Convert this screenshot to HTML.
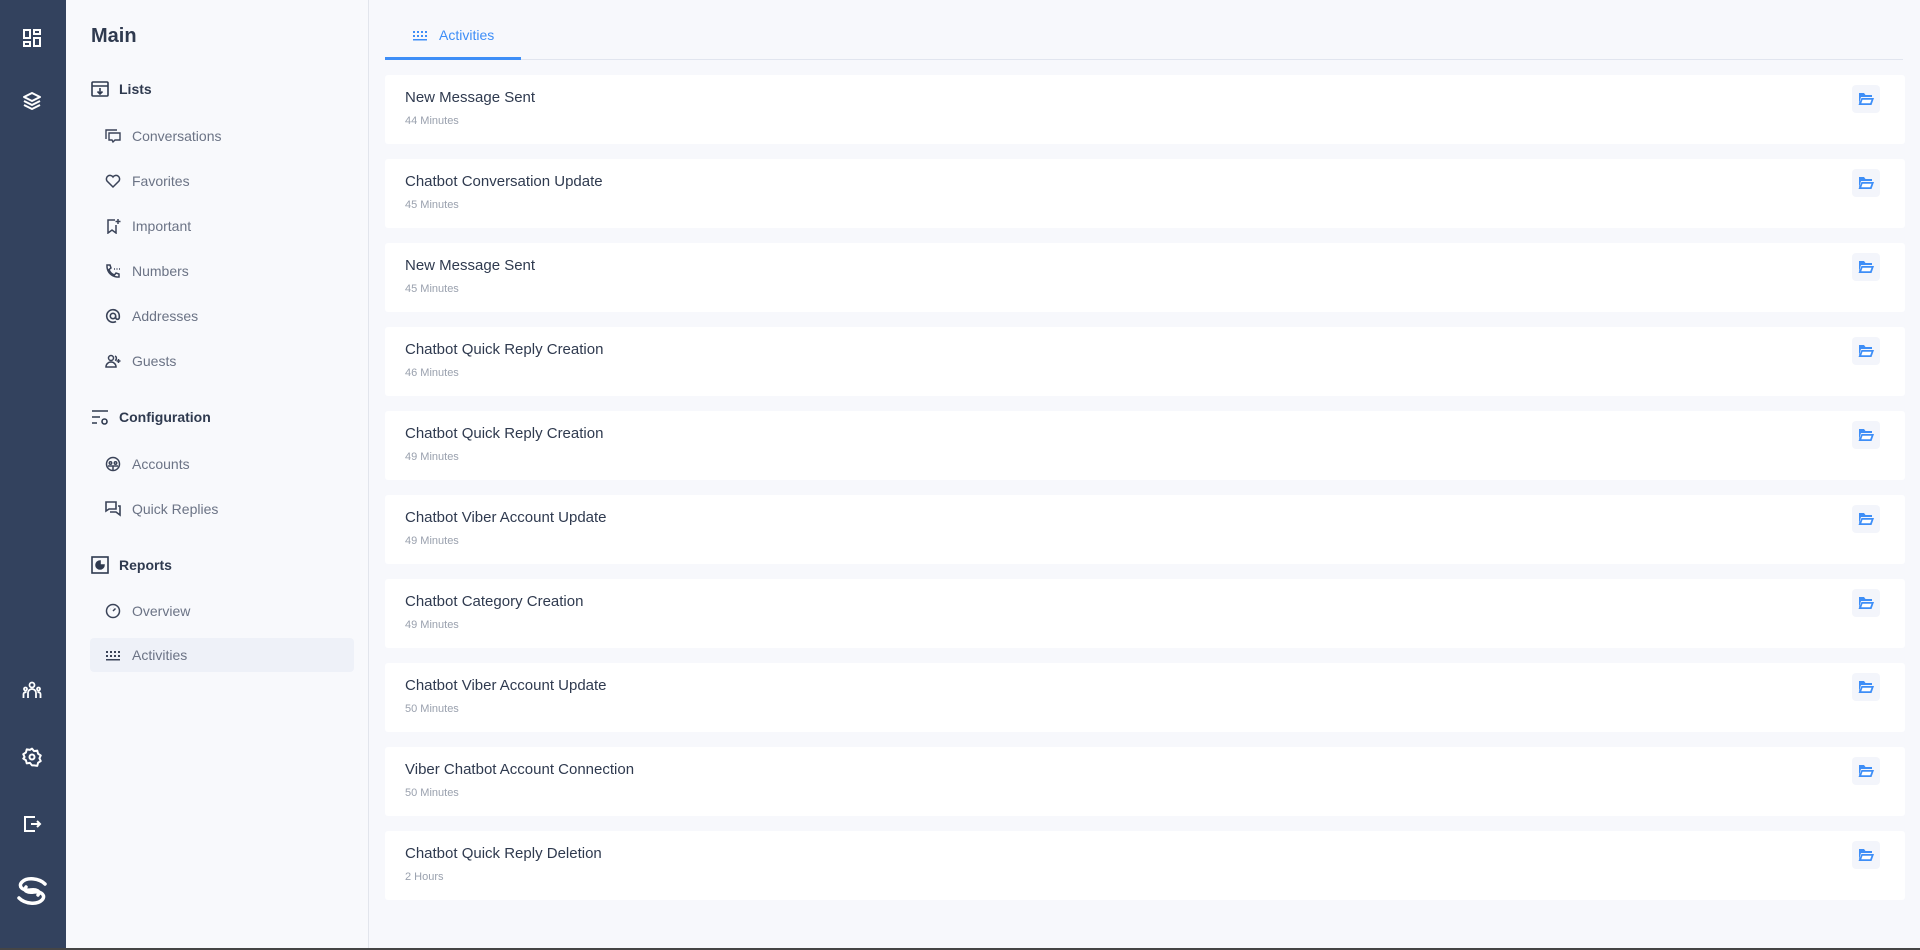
<!DOCTYPE html>
<html><head><meta charset="utf-8"><style>
*{margin:0;padding:0;box-sizing:border-box}
body{width:1920px;height:950px;overflow:hidden;background:#f7f8fc;font-family:"Liberation Sans",sans-serif;position:relative}
.rail{position:absolute;left:0;top:0;width:66px;height:948px;background:#33425e}
.rail svg{position:absolute;left:22px}
.side{position:absolute;left:66px;top:0;width:303px;height:948px;background:#f8f9fc;border-right:1px solid #e2e5ec}
.side .h1{position:absolute;left:25px;top:25px;font-size:20px;font-weight:bold;color:#2f3a4f}
.sec{position:absolute;left:25px;font-size:14px;font-weight:bold;color:#2f3a4f;display:flex;align-items:center}
.sec svg{margin-right:10px}
.it{position:absolute;left:24px;width:264px;height:34px;font-size:14px;color:#6b7385;display:flex;align-items:center;padding-left:15px;border-radius:4px}
.it svg{margin-right:11px}
.it.act{background:#eef1f8}
.main{position:absolute;left:370px;top:0;right:0;height:948px}
.tabs{position:absolute;left:15px;right:17px;top:0;height:60px;border-bottom:1px solid #e1e5ef}
.tab{position:absolute;left:0;top:0;width:136px;height:60px;border-bottom:3px solid #3e8ef7;color:#3e8ef7;font-size:14px;display:flex;align-items:flex-start;padding-left:27px;padding-top:27px}
.tab svg{margin-right:11px}
.card{position:absolute;left:15px;width:1520px;height:69px;background:#fff;border-radius:3px}
.card .t{position:absolute;left:20px;top:14px;font-size:15px;color:#2f3a4f}
.card .s{position:absolute;left:20px;top:40px;font-size:11px;color:#9aa1ae}
.card .b{position:absolute;right:25px;top:10px;width:28px;height:28px;background:#f3f5fb;border-radius:4px;display:flex;align-items:center;justify-content:center}
.bot{position:absolute;left:0;top:948px;width:1920px;height:2px;background:#454545}
</style></head><body>
<div class="rail">
<svg style="top:28px" width="20" height="20" viewBox="0 0 20 20" fill="none" stroke="#fff" stroke-width="2"><rect x="2" y="2" width="6" height="8"/><rect x="12" y="2" width="6" height="4"/><rect x="2" y="14" width="6" height="4"/><rect x="12" y="10" width="6" height="8"/></svg>
<svg style="top:91px" width="20" height="20" viewBox="0 0 20 20" fill="none" stroke="#fff" stroke-width="2" stroke-linejoin="round"><path d="M10 2L18 6L10 10L2 6Z"/><path d="M2 10L10 14L18 10"/><path d="M2 14L10 18L18 14"/></svg>
<svg style="top:680px" width="20" height="20" viewBox="0 0 20 20" fill="none" stroke="#fff" stroke-width="1.8"><circle cx="10" cy="5" r="2.5"/><path d="M6 18v-5a4 4 0 0 1 8 0v5"/><circle cx="3.5" cy="9" r="1.5"/><path d="M1.5 18v-4a2 2 0 0 1 3-1.5"/><circle cx="16.5" cy="9" r="1.5"/><path d="M18.5 18v-4a2 2 0 0 0-3-1.5"/></svg>
<svg style="top:747px" width="20" height="20" viewBox="0 0 24 24" fill="none" stroke="#fff" stroke-width="2.4"><circle cx="12" cy="12" r="3"/><path d="M12 2l2.5 3 3.8-.6 1 3.7 3.2 2-1.6 3.4 1.6 3.4-3.2 2-1 3.7-3.8-.6L12 22l-2.5-3-3.8.6-1-3.7-3.2-2L3.1 12 1.5 8.6l3.2-2 1-3.7 3.8.6z" stroke-linejoin="round"/></svg>
<svg style="top:814px" width="20" height="20" viewBox="0 0 20 20" fill="none" stroke="#fff" stroke-width="2"><path d="M13 3H3v14h10"/><path d="M9 10h9M15 7l3 3-3 3"/></svg>
<svg style="left:15px;top:876px" width="34" height="30" viewBox="0 0 34 30" fill="none" stroke="#fff" stroke-width="3.5" stroke-linecap="round"><path d="M30 8C24 2 12 1 7 6c-4 4 0 9 8 8 6-1 11 1 8 5"/><path d="M4 22c6 6 18 7 23 2 4-4 0-9-8-8-6 1-11-1-8-5"/></svg>
</div>
<div class="side">
<div class="h1">Main</div>
<div class="sec" style="top:80px"><svg width="18" height="18" viewBox="0 0 18 18" fill="none" stroke="#2f3a4f" stroke-width="1.6"><rect x="1" y="2" width="16" height="14" rx="1"/><path d="M1 6h16M9 8v6M6.5 11.5L9 14l2.5-2.5"/></svg>Lists</div>
<div class="it" style="top:119px"><svg width="16" height="16" viewBox="0 0 16 16" fill="none" stroke="#3a4358" stroke-width="1.4"><path d="M1 11V2h11"/><path d="M4 5h11v7H10l-2 2-1-2H4z"/></svg>Conversations</div>
<div class="it" style="top:164px"><svg width="16" height="16" viewBox="0 0 16 16" fill="none" stroke="#3a4358" stroke-width="1.5"><path d="M8 14L2 8a3.3 3.3 0 0 1 6-4 3.3 3.3 0 0 1 6 4z"/></svg>Favorites</div>
<div class="it" style="top:209px"><svg width="16" height="16" viewBox="0 0 16 16" fill="none" stroke="#3a4358" stroke-width="1.5"><path d="M10 2H3v13l4-3 4 3V7M13 1v5M10.5 3.5h5"/></svg>Important</div>
<div class="it" style="top:254px"><svg width="16" height="16" viewBox="0 0 16 16" fill="none" stroke="#3a4358" stroke-width="1.5"><path d="M2 2h3l1 3-2 1.5A9 9 0 0 0 9.5 12L11 10l3 1v3h-2A11 11 0 0 1 2 4z"/><path d="M9 6h1M11.5 6h1M14 6h1" /></svg>Numbers</div>
<div class="it" style="top:299px"><svg width="16" height="16" viewBox="0 0 16 16" fill="none" stroke="#3a4358" stroke-width="1.6"><circle cx="8" cy="8" r="2.7"/><path d="M10.7 8v1.5a1.8 1.8 0 0 0 3.6 0V8A6.3 6.3 0 1 0 11 13.5"/></svg>Addresses</div>
<div class="it" style="top:344px"><svg width="16" height="16" viewBox="0 0 16 16" fill="none" stroke="#3a4358" stroke-width="1.5"><circle cx="6" cy="5" r="2.5"/><path d="M1 14a5 5 0 0 1 10 0zM10 3a2.5 2.5 0 0 1 0 4.5M13.5 6v4M11.5 8h4"/></svg>Guests</div>
<div class="sec" style="top:408px"><svg width="18" height="18" viewBox="0 0 18 18" fill="none" stroke="#2f3a4f" stroke-width="1.6"><path d="M1 3h16M1 9h8M1 15h5"/><circle cx="13.5" cy="13.5" r="2.5"/></svg>Configuration</div>
<div class="it" style="top:447px"><svg width="16" height="16" viewBox="0 0 16 16" fill="none" stroke="#3a4358" stroke-width="1.5"><circle cx="8" cy="8" r="6.5"/><circle cx="5.5" cy="7" r="1.2"/><circle cx="10.5" cy="7" r="1.2"/><path d="M3 10h10M8 10v4"/></svg>Accounts</div>
<div class="it" style="top:492px"><svg width="16" height="16" viewBox="0 0 16 16" fill="none" stroke="#3a4358" stroke-width="1.6"><path d="M1 1h10v7H4L1 10z"/><path d="M5 11h6l4 3V5h-2"/></svg>Quick Replies</div>
<div class="sec" style="top:556px"><svg width="18" height="18" viewBox="0 0 18 18" fill="none" stroke="#2f3a4f" stroke-width="1.6"><rect x="1" y="1" width="16" height="16"/><path d="M9 5a4 4 0 1 0 4 4H9z" fill="#2f3a4f"/></svg>Reports</div>
<div class="it" style="top:594px"><svg width="16" height="16" viewBox="0 0 16 16" fill="none" stroke="#3a4358" stroke-width="1.5"><circle cx="8" cy="8" r="6.5"/><path d="M8 8l2.5-2.5M5 6h.1M8 4.5h.1"/></svg>Overview</div>
<div class="it act" style="top:638px"><svg width="16" height="16" viewBox="0 0 16 16" fill="#3a4358"><rect x="1" y="4" width="2" height="2"/><rect x="5" y="4" width="2" height="2"/><rect x="9" y="4" width="2" height="2"/><rect x="13" y="4" width="2" height="2"/><rect x="1" y="8" width="2" height="2"/><rect x="5" y="8" width="2" height="2"/><rect x="9" y="8" width="2" height="2"/><rect x="13" y="8" width="2" height="2"/><rect x="1" y="12" width="14" height="1.5"/></svg>Activities</div>
</div>
<div class="main">
<div class="tabs"><div class="tab"><svg width="16" height="16" viewBox="0 0 16 16" fill="#3e8ef7"><rect x="1" y="4" width="2" height="2"/><rect x="5" y="4" width="2" height="2"/><rect x="9" y="4" width="2" height="2"/><rect x="13" y="4" width="2" height="2"/><rect x="1" y="8" width="2" height="2"/><rect x="5" y="8" width="2" height="2"/><rect x="9" y="8" width="2" height="2"/><rect x="13" y="8" width="2" height="2"/><rect x="1" y="12" width="14" height="1.5"/></svg>Activities</div></div>
</div>
<div class="bot"></div>
<div style="position:absolute;left:370px;top:0">
<div class="card" style="top:75px"><div class="t">New Message Sent</div><div class="s">44 Minutes</div><div class="b"><svg width="16" height="14" viewBox="0 0 16 14" fill="#3e8ef7"><path d="M0 1h6l1.5 2H14v2H3L1 12V1z"/><path d="M3.5 6H16l-2.5 7H0.5z"/><path d="M4.5 7.8h9l-1.3 3.4H3.3z" fill="#fff"/></svg></div></div>
<div class="card" style="top:159px"><div class="t">Chatbot Conversation Update</div><div class="s">45 Minutes</div><div class="b"><svg width="16" height="14" viewBox="0 0 16 14" fill="#3e8ef7"><path d="M0 1h6l1.5 2H14v2H3L1 12V1z"/><path d="M3.5 6H16l-2.5 7H0.5z"/><path d="M4.5 7.8h9l-1.3 3.4H3.3z" fill="#fff"/></svg></div></div>
<div class="card" style="top:243px"><div class="t">New Message Sent</div><div class="s">45 Minutes</div><div class="b"><svg width="16" height="14" viewBox="0 0 16 14" fill="#3e8ef7"><path d="M0 1h6l1.5 2H14v2H3L1 12V1z"/><path d="M3.5 6H16l-2.5 7H0.5z"/><path d="M4.5 7.8h9l-1.3 3.4H3.3z" fill="#fff"/></svg></div></div>
<div class="card" style="top:327px"><div class="t">Chatbot Quick Reply Creation</div><div class="s">46 Minutes</div><div class="b"><svg width="16" height="14" viewBox="0 0 16 14" fill="#3e8ef7"><path d="M0 1h6l1.5 2H14v2H3L1 12V1z"/><path d="M3.5 6H16l-2.5 7H0.5z"/><path d="M4.5 7.8h9l-1.3 3.4H3.3z" fill="#fff"/></svg></div></div>
<div class="card" style="top:411px"><div class="t">Chatbot Quick Reply Creation</div><div class="s">49 Minutes</div><div class="b"><svg width="16" height="14" viewBox="0 0 16 14" fill="#3e8ef7"><path d="M0 1h6l1.5 2H14v2H3L1 12V1z"/><path d="M3.5 6H16l-2.5 7H0.5z"/><path d="M4.5 7.8h9l-1.3 3.4H3.3z" fill="#fff"/></svg></div></div>
<div class="card" style="top:495px"><div class="t">Chatbot Viber Account Update</div><div class="s">49 Minutes</div><div class="b"><svg width="16" height="14" viewBox="0 0 16 14" fill="#3e8ef7"><path d="M0 1h6l1.5 2H14v2H3L1 12V1z"/><path d="M3.5 6H16l-2.5 7H0.5z"/><path d="M4.5 7.8h9l-1.3 3.4H3.3z" fill="#fff"/></svg></div></div>
<div class="card" style="top:579px"><div class="t">Chatbot Category Creation</div><div class="s">49 Minutes</div><div class="b"><svg width="16" height="14" viewBox="0 0 16 14" fill="#3e8ef7"><path d="M0 1h6l1.5 2H14v2H3L1 12V1z"/><path d="M3.5 6H16l-2.5 7H0.5z"/><path d="M4.5 7.8h9l-1.3 3.4H3.3z" fill="#fff"/></svg></div></div>
<div class="card" style="top:663px"><div class="t">Chatbot Viber Account Update</div><div class="s">50 Minutes</div><div class="b"><svg width="16" height="14" viewBox="0 0 16 14" fill="#3e8ef7"><path d="M0 1h6l1.5 2H14v2H3L1 12V1z"/><path d="M3.5 6H16l-2.5 7H0.5z"/><path d="M4.5 7.8h9l-1.3 3.4H3.3z" fill="#fff"/></svg></div></div>
<div class="card" style="top:747px"><div class="t">Viber Chatbot Account Connection</div><div class="s">50 Minutes</div><div class="b"><svg width="16" height="14" viewBox="0 0 16 14" fill="#3e8ef7"><path d="M0 1h6l1.5 2H14v2H3L1 12V1z"/><path d="M3.5 6H16l-2.5 7H0.5z"/><path d="M4.5 7.8h9l-1.3 3.4H3.3z" fill="#fff"/></svg></div></div>
<div class="card" style="top:831px"><div class="t">Chatbot Quick Reply Deletion</div><div class="s">2 Hours</div><div class="b"><svg width="16" height="14" viewBox="0 0 16 14" fill="#3e8ef7"><path d="M0 1h6l1.5 2H14v2H3L1 12V1z"/><path d="M3.5 6H16l-2.5 7H0.5z"/><path d="M4.5 7.8h9l-1.3 3.4H3.3z" fill="#fff"/></svg></div></div>
</div>
</body></html>
